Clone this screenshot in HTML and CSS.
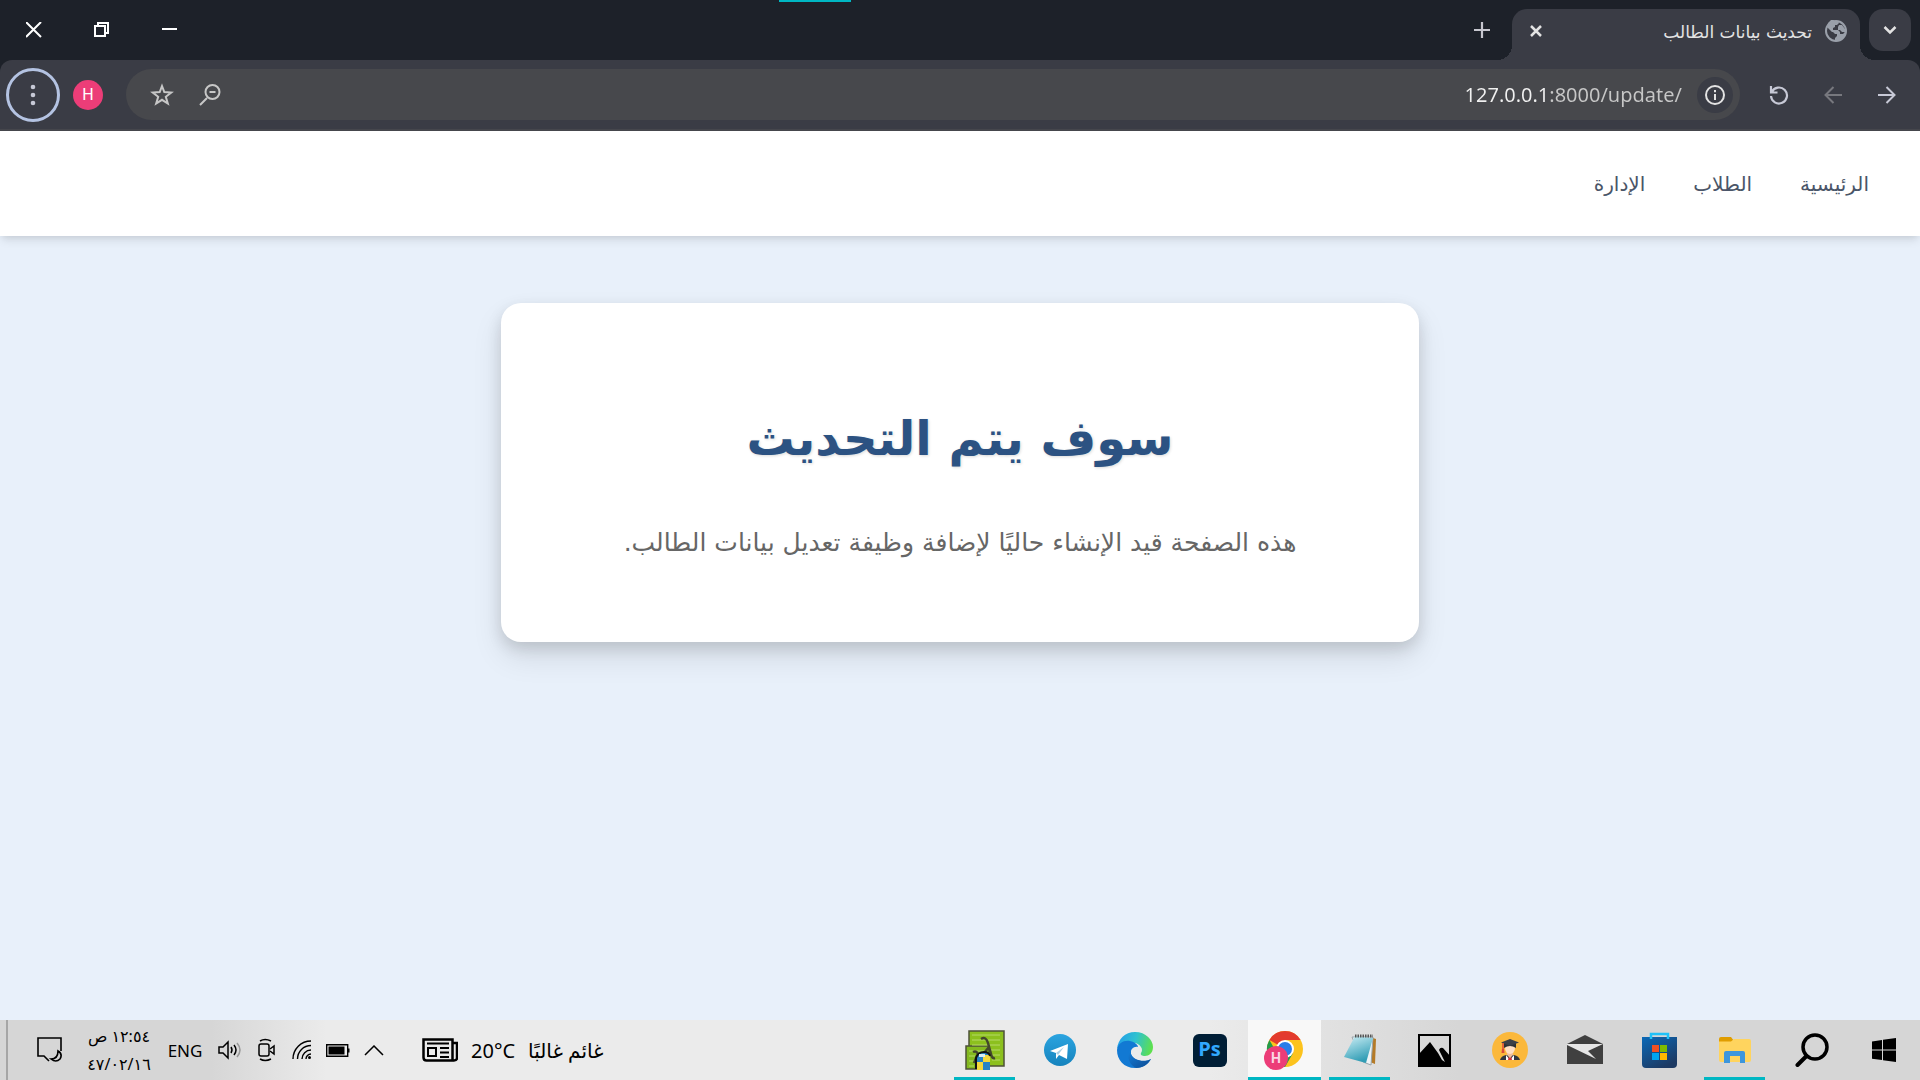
FILE: index.html
```html
<!DOCTYPE html>
<html lang="ar" dir="rtl">
<head>
<meta charset="utf-8">
<title>تحديث بيانات الطالب</title>
<meta name="viewport" content="width=device-width, initial-scale=1">
<link rel="stylesheet" href="styles.css">
</head>
<body>
<div class="browser-chrome">
  <div class="title-bar">
    <div class="screen-strip"></div>
    <button class="tab-search" type="button" aria-label="البحث في علامات التبويب">
      <svg width="14" height="10" viewBox="0 0 14 10"><path d="M1.500 2 7 7.500 12.500 2" fill="none" stroke="currentColor" stroke-width="2.500"/></svg>
    </button>
    <div class="tab">
      <svg class="globe" width="22" height="22" viewBox="0 0 22 22"><circle cx="11" cy="11" r="10" fill="none" stroke="#9aa0aa" stroke-width="2"/><path d="M10 1h3l1 2-2 2h-2v2l-2 1v2h5l2 2v2h3l2-2 1-1-.5 3-3.500 5.500-5 1.500-2-1v-2l2-2v-2h-2l-2-2H7l-5-5 1-4 4-4z" fill="#9aa0aa"/><path d="M14 5h3l3 4v3h-3l-2-2h-2V7z" fill="#9aa0aa"/></svg>
      <span class="tab-title">تحديث بيانات الطالب</span>
      <button class="tab-close" type="button" aria-label="إغلاق علامة التبويب">
        <svg width="14" height="14" viewBox="0 0 14 14"><path d="m2 2 10 10M12 2 2 12" stroke="currentColor" stroke-width="2.500"/></svg>
      </button>
    </div>
    <button class="new-tab" type="button" aria-label="علامة تبويب جديدة">
      <svg width="16" height="16" viewBox="0 0 16 16"><path d="M8 0v16M0 8h16" stroke="currentColor" stroke-width="2.200"/></svg>
    </button>
    <div class="window-controls">
      <button type="button" aria-label="تصغير"><svg width="16" height="16" viewBox="0 0 16 16"><path d="M0 7h15" stroke="currentColor" stroke-width="2"/></svg></button>
      <button type="button" aria-label="استعادة"><svg width="16" height="16" viewBox="0 0 16 16"><path d="M1 4h10v10H1zM4 4V1h10v10h-3" fill="none" stroke="currentColor" stroke-width="2"/></svg></button>
      <button type="button" aria-label="إغلاق"><svg width="16" height="16" viewBox="0 0 16 16"><path d="m0 0 15 15M15 0 0 15" stroke="currentColor" stroke-width="2"/></svg></button>
    </div>
  </div>
  <div class="toolbar">
    <button class="tool" type="button" aria-label="للأمام"><svg width="18" height="18" viewBox="0 0 18 18"><path d="M0 9h16.500M8.500 1l8 8-8 8" fill="none" stroke="currentColor" stroke-width="2"/></svg></button>
    <button class="tool tool-off" type="button" aria-label="للخلف"><svg width="18" height="18" viewBox="0 0 18 18"><path d="M18 9H1.500M9.500 1l-8 8 8 8" fill="none" stroke="currentColor" stroke-width="2"/></svg></button>
    <button class="tool" type="button" aria-label="إعادة التحميل"><svg width="20" height="20" viewBox="0 0 20 20"><path d="M2 1v6.500h6.500M2.800 7A8 8 0 1 1 2 11" fill="none" stroke="currentColor" stroke-width="2.200"/></svg></button>
    <div class="omnibox">
      <button class="site-info" type="button" aria-label="معلومات الموقع"><svg width="20" height="20" viewBox="0 0 20 20"><circle cx="10" cy="10" r="9" fill="none" stroke="currentColor" stroke-width="2"/><path d="M10 9v6M10 5v2.200" stroke="currentColor" stroke-width="2"/></svg></button>
      <input class="address" type="text" dir="ltr" aria-label="شريط العناوين" value="127.0.0.1:8000/update/">
      <button class="box-tool" type="button" aria-label="تكبير أو تصغير"><svg width="22" height="22" viewBox="0 0 22 22"><path d="M1 21l7-7M10.500 8h6" stroke="currentColor" stroke-width="2"/><circle cx="13.500" cy="8" r="7" fill="none" stroke="currentColor" stroke-width="2"/></svg></button>
      <button class="box-tool" type="button" aria-label="إضافة إشارة مرجعية"><svg width="24" height="24" viewBox="0 0 24 24"><path d="M12 3l2.300 6 7 .5-5.500 4.300 2 6.700L12 16.800l-5.800 3.700 2-6.700L2.700 9.500l7-.5z" fill="none" stroke="currentColor" stroke-width="2"/></svg></button>
    </div>
    <button class="avatar" type="button" aria-label="الملف الشخصي">H</button>
    <button class="menu" type="button" aria-label="القائمة"><svg width="6" height="22" viewBox="0 0 6 22"><g fill="currentColor"><circle cx="3" cy="3" r="2.300"/><circle cx="3" cy="11" r="2.300"/><circle cx="3" cy="19" r="2.300"/></g></svg></button>
  </div>
</div>

<nav class="site-nav">
  <a href="#home">الرئيسية</a>
  <a href="#students">الطلاب</a>
  <a href="#admin">الإدارة</a>
</nav>

<main class="page">
  <section class="card">
    <h1>سوف يتم التحديث</h1>
    <p>هذه الصفحة قيد الإنشاء حاليًا لإضافة وظيفة تعديل بيانات الطالب.</p>
  </section>
</main>

<footer class="taskbar">
  <div class="system-buttons">
    <button type="button" aria-label="ابدأ"><svg width="24" height="24" viewBox="0 0 24 24"><path d="M0 3.500 10 2v9.500H0zM11 1.800 24 0v11.500H11zM0 12.500h10V22L0 20.700zM11 12.500h13V24l-13-1.800z"/></svg></button>
    <button type="button" aria-label="بحث"><svg width="34" height="34" viewBox="0 0 34 34"><circle cx="20" cy="14" r="12" fill="none" stroke="#000" stroke-width="3.500"/><path d="M11.500 23 2.500 32" stroke="#000" stroke-width="4" stroke-linecap="round"/></svg></button>
  </div>
  <div class="apps">
    <button class="app running" type="button" aria-label="مستكشف الملفات"><svg width="36" height="36" viewBox="0 0 36 36"><path d="M2 7q0-2 2-2h10l3 4h15q2 0 2 2v4H2z" fill="#e09d00"/><path d="M2 9.500h12l3-2.500h15q2 0 2 2v19q0 2-2 2H4q-2 0-2-2z" fill="#ffd45e"/><path d="M7 31V21q0-2 2-2h17q2 0 2 2v10h-5v-7H13v7z" fill="#3d96dc"/></svg></button>
    <button class="app" type="button" aria-label="المتجر"><svg width="36" height="36" viewBox="0 0 36 36"><defs><linearGradient id="bag" x1="0" y1="0" x2=".6" y2="1"><stop offset="0" stop-color="#0a69b8"/><stop offset="1" stop-color="#1d3a63"/></linearGradient></defs><path d="M0 5h35v27q0 4-4 4H4q-4 0-4-4z" fill="url(#bag)"/><path d="M9 7V2h17v5" fill="none" stroke="#1fc1f8" stroke-width="2.500"/><path d="M10 13h7v7h-7z" fill="#f25022"/><path d="M18 13h7v7h-7z" fill="#7fba00"/><path d="M10 21h7v7h-7z" fill="#00a4ef"/><path d="M18 21h7v7h-7z" fill="#ffb900"/></svg></button>
    <button class="app" type="button" aria-label="البريد"><svg width="36" height="30" viewBox="0 0 36 30"><path d="M0 9 18 0l18 9v20H0z" fill="#404040"/><path d="M0 9h36L21 16l8 8L0 10z" fill="#e6e6e6"/></svg></button>
    <button class="app" type="button" aria-label="بوابة الطلاب"><svg width="36" height="36" viewBox="0 0 36 36"><circle cx="18" cy="18" r="18" fill="#fbb83b"/><path d="M8 28q1-4 6-5h8q5 1 6 5z" fill="#32373f"/><path d="m14 23 4 5 4-5v5h-8z" fill="#fff"/><path d="M17 24h2l1 4h-4z" fill="#d93636"/><path d="M15 18h6v5l-3 3-3-3z" fill="#eebd9b"/><ellipse cx="18" cy="16" rx="5" ry="6" fill="#ffdfc4"/><path d="M12 11h12v5q-6-4-12 0z" fill="#2c3036"/><path d="m18 7 9 3.500-9 3.500-9-3.500z" fill="#3c4047"/><path d="M11 11v7" stroke="#dc4a38" stroke-width="1.500"/><path d="M10 17h2l.5 4h-3z" fill="#dc4a38"/></svg></button>
    <button class="app" type="button" aria-label="الصور"><svg width="33" height="33" viewBox="0 0 33 33"><path d="M1 1h31v31H1z" fill="none" stroke="#000" stroke-width="2"/><path d="M1 20 12 8l8 11 4 7 3 2-6-12q1-3 4-2l8 9v10H1z"/></svg></button>
    <button class="app running" type="button" aria-label="المفكرة"><svg width="36" height="34" viewBox="0 0 36 34"><defs><linearGradient id="pad" x1="0" y1="0" x2=".4" y2="1"><stop offset="0" stop-color="#d4f1f7"/><stop offset=".55" stop-color="#7ac4d4"/><stop offset="1" stop-color="#329db5"/></linearGradient></defs><path d="m31 5 3 1-1 25-5-2z" fill="#b47a27"/><path d="M10 4h21l-2 28-8-3z" fill="#eef3f5" stroke="#98a4aa"/><path d="M13 3 2 24l22 6 7-25z" fill="url(#pad)"/><path d="M13 3h18" stroke="#555" stroke-width="3" stroke-dasharray="1.500 1"/></svg></button>
    <button class="app running active" type="button" aria-label="كروم"><svg width="44" height="40" viewBox="0 0 44 40"><circle cx="22" cy="19" r="18" fill="#fcc31e"/><path d="M22 19 6.400 10A18 18 0 0 1 37.600 10H22z" fill="#e33b2e"/><path d="M6.400 10A18 18 0 0 0 22 37l7.800-13.500H14.200z" fill="#249b4a"/><circle cx="22" cy="19" r="9" fill="#fff"/><circle cx="22" cy="19" r="7" fill="#2b7de9"/><circle cx="13" cy="28" r="12" fill="#ec3d78"/><text x="13" y="33" text-anchor="middle" class="badge-letter">H</text></svg></button>
    <button class="app" type="button" aria-label="فوتوشوب"><span class="photoshop">Ps</span></button>
    <button class="app" type="button" aria-label="إيدج"><svg width="36" height="36" viewBox="0 0 36 36"><defs><linearGradient id="wave" x1="0" y1=".3" x2="1" y2=".5"><stop offset="0" stop-color="#229dea"/><stop offset=".5" stop-color="#2fc2cf"/><stop offset="1" stop-color="#5ee04d"/></linearGradient><linearGradient id="deep" x1="0" y1="0" x2="1" y2="1"><stop offset="0" stop-color="#1480dc"/><stop offset="1" stop-color="#0e4a91"/></linearGradient></defs><path d="M0 17C1 7 8 0 18 0c11 0 18 8 18 15 0 6-4 9-8 9-3 0-5-1-4-3 3-4-1-9-6-10C10 10 3 12 0 17z" fill="url(#wave)"/><path d="M0 18C1 11 7 8 13 9c5 1 8 4 8 6-4-1-8 2-7 7 2 7 13 9 20 5-3 6-9 9-16 9C7 36 0 28 0 18z" fill="#1279d3"/><path d="M14 17c-4 5-4 14 5 19 7 0 12-4 15-9-7 4-18 1-20-5z" fill="url(#deep)"/></svg></button>
    <button class="app" type="button" aria-label="تيليجرام"><svg width="32" height="32" viewBox="0 0 32 32"><defs><linearGradient id="sky" x1="0" y1="0" x2="0" y2="1"><stop offset="0" stop-color="#2ba4e0"/><stop offset="1" stop-color="#1683bd"/></linearGradient></defs><circle cx="16" cy="16" r="16" fill="url(#sky)"/><path d="m6 17 18-7-1 15-8-4-3 4v-6z" fill="#fff"/><path d="m12 19 8-6-6 8z" fill="#a9cfe4"/></svg></button>
    <button class="app running" type="button" aria-label="محرر النصوص"><svg width="40" height="40" viewBox="0 0 40 40"><g stroke="#4e5138" stroke-width="1.500"><path d="M4 1h35v35H4z" fill="#8cc01e"/><path d="M1 16h23v23H1z" fill="#83b91e"/></g><path d="M7 5h28M7 10h28M7 15h28M24 20h11M27 25h8M27 30h8M4 21h16M4 26h6M4 31h5M4 36h5" stroke="#b5d967"/><path d="M16 9q5-3 7 4l3 11q1 5 4 4M24 17l-5 6M8 22q4-2 5 3M12 26l-3 7" fill="none" stroke="#43472c" stroke-width="2.500"/><path d="M12 25q2-3 6-3 5 0 7 3v15H12z" fill="#2783c5"/><path d="M18 25h7v7h-7zM12 32h6v8h-6z" fill="#f3d73c"/><path d="M11 39V28q2-6 8-6 5 0 6 4" fill="none" stroke="#111" stroke-width="2"/><path d="M14 24h6v3h-6z" fill="#d7ecf4"/></svg></button>
  </div>
  <div class="tray" dir="ltr">
    <button class="desktop-edge" type="button" aria-label="إظهار سطح المكتب"></button>
    <button class="notices" type="button" aria-label="الإشعارات"><svg width="26" height="26" viewBox="0 0 26 26"><path d="M12 24 7 19H1V1h23v13" fill="none" stroke="#000" stroke-width="1.600"/><path d="M21 14q5 3 2 8-4 4-9 0 7 0 7-8z" fill="none" stroke="#000" stroke-width="1.600"/></svg></button>
    <div class="clock" dir="rtl"><span>١٢:٥٤ ص</span><span>٤٧/٠٢/١٦</span></div>
    <button class="language" type="button">ENG</button>
    <button class="tray-icon" type="button" aria-label="الصوت"><svg width="24" height="20" viewBox="0 0 24 20"><path d="M1 7h4l5-5v16l-5-5H1z" fill="none" stroke="#000" stroke-width="1.500"/><path d="M13 7q2 3 0 6M16 5q4 5 0 10" fill="none" stroke="#000" stroke-width="1.500"/><path d="M19 3q6 7 0 14" fill="none" stroke="#999" stroke-width="1.500"/></svg></button>
    <button class="tray-icon" type="button" aria-label="الكاميرا"><svg width="18" height="24" viewBox="0 0 18 24"><rect x="2" y="6" width="10" height="12" rx="2" fill="none" stroke="#000" stroke-width="1.500"/><path d="m13 11 4-3v8l-4-3M3 3q5-3 11 0M3 21q5 3 11 0" fill="none" stroke="#000" stroke-width="1.500"/></svg></button>
    <button class="tray-icon" type="button" aria-label="الشبكة"><svg width="20" height="20" viewBox="0 0 20 20"><g fill="none" stroke="#000" stroke-width="1.400"><path d="M1 19A18 18 0 0 1 19 1M5.500 19A13.500 13.500 0 0 1 19 5.500M10 19a9 9 0 0 1 9-9"/><path d="M14 19a5 5 0 0 1 5-5"/></g><circle cx="17.500" cy="17.500" r="1.500"/></svg></button>
    <button class="tray-icon" type="button" aria-label="البطارية"><svg width="24" height="13" viewBox="0 0 24 13"><path d="M.7.7h21v11.600H.7z" fill="none" stroke="#000" stroke-width="1.400"/><path d="M2.500 2.500h16v8h-16zM22 4.500h1.500v4H22z"/></svg></button>
    <button class="tray-icon" type="button" aria-label="إظهار الرموز المخفية"><svg width="20" height="11" viewBox="0 0 20 11"><path d="m1 10 9-9 9 9" fill="none" stroke="#000" stroke-width="1.500"/></svg></button>
    <button class="weather" type="button">
      <svg width="36" height="24" viewBox="0 0 36 24"><path d="M1.500 1.500h29v21h-26q-3 0-3-3zM30.500 5H35v15q0 2.500-3 2.500h-4" fill="none" stroke="#000" stroke-width="2.500"/><path d="M5 5.500h22M18 10h9M18 14.500h9M18 19h9" stroke="#000" stroke-width="2"/><path d="M6 10h8v8H6z" fill="none" stroke="#000" stroke-width="2"/></svg>
      <span>20°C</span><span dir="rtl">غائم غالبًا</span>
    </button>
  </div>
</footer>
</body>
</html>
```
FILE: styles.css
```css
:root {
  --latin: "Noto Sans", "DejaVu Sans", sans-serif;
  --page-font: "DejaVu Sans", sans-serif;
  --bar: #3a3c45;
  --accent: #00b7c3;
}

* {
  box-sizing: border-box;
}

body {
  display: flex;
  flex-direction: column;
  min-height: 100vh;
  margin: 0;
  background: #e8f0fa;
  font-family: var(--page-font);
}

button {
  display: flex;
  align-items: center;
  justify-content: center;
  margin: 0;
  padding: 0;
  border: 0;
  background: none;
  color: inherit;
  font: inherit;
}

svg {
  display: block;
  flex: none;
}

/* Browser frame */
.browser-chrome {
  background: #1d2129;
  color: #e3e3e3;
}

.title-bar {
  position: relative;
  display: flex;
  align-items: flex-end;
  height: 60px;
  padding-right: 9px;
}

.screen-strip {
  position: absolute;
  top: 0;
  left: 779px;
  width: 72px;
  height: 2px;
  background: var(--accent);
}

.tab-search {
  width: 42px;
  height: 42px;
  margin-bottom: 9px;
  border-radius: 14px;
  background: var(--bar);
}

.tab {
  position: relative;
  display: flex;
  align-items: center;
  gap: 13px;
  width: 348px;
  height: 51px;
  margin-right: 9px;
  padding: 0 13px 8px 17px;
  border-radius: 15px 15px 0 0;
  background: var(--bar);
}

.tab::before,
.tab::after {
  content: "";
  position: absolute;
  bottom: 0;
  width: 15px;
  height: 15px;
}

.tab::before {
  right: -15px;
  background: radial-gradient(circle at 100% 0, transparent 15px, var(--bar) 15px);
}

.tab::after {
  left: -15px;
  background: radial-gradient(circle at 0 0, transparent 15px, var(--bar) 15px);
}

.tab-title {
  flex: 1;
  padding-top: 2px;
  font-size: 17px;
  line-height: 24px;
  white-space: nowrap;
}

.tab-close {
  width: 14px;
  height: 24px;
}

.new-tab {
  width: 42px;
  height: 60px;
  margin-right: 9px;
  color: #c7c7cf;
}

.window-controls {
  display: flex;
  height: 60px;
  margin-right: auto;
  color: #fff;
}

.window-controls button {
  width: 68px;
}

.toolbar {
  display: flex;
  align-items: center;
  height: 71px;
  padding: 0 6px;
  border-bottom: 2px solid #45464c;
  border-radius: 12px 12px 0 0;
  background: var(--bar);
}

.tool {
  width: 54px;
  height: 54px;
  color: #c7c9d6;
}

.tool-off {
  color: #77787e;
}

.omnibox {
  display: flex;
  flex: 1;
  align-items: center;
  height: 51px;
  margin: 0 12px 0 23px;
  padding: 0 7px 0 12px;
  border-radius: 26px;
  background: #47484c;
}

.site-info {
  width: 36px;
  height: 36px;
  border-radius: 50%;
  background: var(--bar);
}

/* The host is lighter than the rest of the address */
.address {
  flex: 1;
  min-width: 0;
  height: 36px;
  margin-right: 15px;
  padding: 0;
  border: 0;
  outline: 0;
  background: linear-gradient(to left, #c7c7c7 132px, #f0f0f0 132px);
  background-clip: text;
  -webkit-background-clip: text;
  color: transparent;
  font-family: var(--latin);
  font-size: 20px;
  text-align: right;
}

.box-tool {
  width: 48px;
  height: 48px;
  color: #c7c7c7;
}

.avatar {
  width: 30px;
  height: 30px;
  border-radius: 50%;
  background: #ec3d78;
  color: #fff;
  font-family: Roboto, sans-serif;
  font-size: 16px;
}

.menu {
  width: 54px;
  height: 54px;
  margin-right: 13px;
  border: 3px solid #b4c3e2;
  border-radius: 50%;
  color: #c7c9d6;
}

/* Site */
.site-nav {
  display: flex;
  align-items: center;
  gap: 48px;
  min-height: 105px;
  padding: 0 51px;
  background: #fff;
  box-shadow: 0 6px 9px -2px rgba(0, 0, 0, 0.1), 0 3px 6px -2px rgba(0, 0, 0, 0.06);
}

.site-nav a {
  color: #4a5568;
  font-size: 20px;
  line-height: 30px;
  text-decoration: none;
}

.page {
  flex: 1;
  padding: 67px 24px;
}

.card {
  max-width: 918px;
  margin: 0 auto;
  padding: 90px 48px 75px;
  border-radius: 20px;
  background: #fff;
  box-shadow: 0 15px 30px rgba(0, 0, 0, 0.1), 0 6px 15px rgba(0, 0, 0, 0.12);
  text-align: center;
}

.card h1 {
  margin: 0 0 36px;
  color: #2c5282;
  font-size: 48px;
  line-height: 90px;
  text-shadow: 1px 1px 3px rgba(0, 0, 0, 0.15);
}

.card p {
  margin: 0;
  color: #666;
  font-size: 25px;
  line-height: 48px;
}

/* Taskbar */
.taskbar {
  display: flex;
  height: 60px;
  background: linear-gradient(to right, #d6d6d6 11%, #ebebeb 17%, #ebebeb 63%, #d6d6d6 76%);
  color: #000;
}

.system-buttons,
.apps,
.tray {
  display: flex;
  align-items: stretch;
}

.system-buttons button {
  width: 72px;
}

.apps {
  gap: 2px;
  margin-right: 5px;
}

.app {
  position: relative;
  width: 73px;
}

.active {
  background: #f8f8f8;
}

.running::after {
  content: "";
  position: absolute;
  right: 6px;
  bottom: 0;
  left: 6px;
  height: 3px;
  background: var(--accent);
}

.active::after {
  right: 0;
  left: 0;
}

.badge-letter {
  fill: #fbd6e3;
  font-family: Roboto, sans-serif;
  font-size: 14px;
  font-weight: 700;
}

.photoshop {
  width: 34px;
  height: 33px;
  border-radius: 6px;
  background: #001e36;
  color: #31a8ff;
  font-family: "Open Sans", sans-serif;
  font-size: 20px;
  font-weight: 700;
  line-height: 30px;
}

.tray {
  margin-right: auto;
  font-family: var(--latin);
}

.desktop-edge {
  width: 8px;
  border-right: 2px solid #a6a6a6;
}

.notices {
  width: 72px;
  padding-left: 12px;
}

.clock {
  display: flex;
  flex-direction: column;
  align-items: center;
  justify-content: center;
  width: 78px;
  font-size: 16px;
  line-height: 28px;
}

.language {
  width: 54px;
  font-size: 17px;
}

.tray-icon {
  width: 36px;
}

.weather {
  gap: 13px;
  margin-left: 30px;
  font-size: 20px;
}
```
